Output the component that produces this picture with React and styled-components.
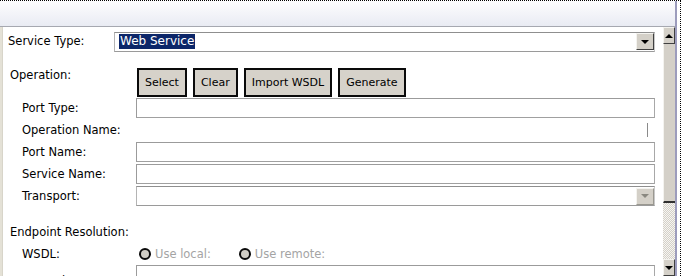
import styled, { createGlobalStyle } from "styled-components";

const Global = createGlobalStyle`
    html, body {
        margin: 0;
        padding: 0;
        background: #ffffff;
        overflow: hidden;
    }
    * { box-sizing: border-box; }
`

export default function App(){
    return(
        <>
            <Global />
            <Frame>
                <Main>
                    <Header />
                    <Body>
                        <LeftStrip />
                        <Content>
                            <Row height={21} top={4}>
                                <Label width={111} indent={5}>Service Type:</Label>
                                <Combo>
                                    <Selected>Web Service</Selected>
                                    <DropButton><Arrow /></DropButton>
                                </Combo>
                            </Row>

                            <Row height={29} top={16} align="flex-start">
                                <Label indent={7} pad={1}>Operation:</Label>
                                <Buttons>
                                    <Button>Select</Button>
                                    <Button>Clear</Button>
                                    <Button>Import WSDL</Button>
                                    <Button>Generate</Button>
                                </Buttons>
                            </Row>

                            <Row top={1}>
                                <Label indent={19}>Port Type:</Label>
                                <Input />
                            </Row>
                            <Row>
                                <Label indent={19}>Operation Name:</Label>
                                <ReadOnly />
                            </Row>
                            <Row>
                                <Label indent={19}>Port Name:</Label>
                                <Input />
                            </Row>
                            <Row>
                                <Label indent={19}>Service Name:</Label>
                                <Input />
                            </Row>
                            <Row>
                                <Label indent={19}>Transport:</Label>
                                <Combo>
                                    <DropButton disabled><Arrow disabled /></DropButton>
                                </Combo>
                            </Row>

                            <Row top={16}>
                                <Label indent={7} width={300}>Endpoint Resolution:</Label>
                            </Row>
                            <Row>
                                <Label indent={19}>WSDL:</Label>
                                <Radios>
                                    <Radio><Dot />Use local:</Radio>
                                    <Radio><Dot />Use remote:</Radio>
                                </Radios>
                            </Row>
                            <Row top={1}>
                                <Label indent={28} pad={12}>Location:</Label>
                                <Input />
                            </Row>
                        </Content>
                        <Scrollbar>
                            <ScrollButton><Arrow up /></ScrollButton>
                            <Thumb />
                            <Track />
                            <ScrollButton><Arrow /></ScrollButton>
                        </Scrollbar>
                    </Body>
                </Main>
                <EdgeLine />
            </Frame>
        </>
    )
}

const Frame = styled.div`
    display: flex;
    width: 681px;
    height: 276px;
    border-top: 1px dotted #000;
    border-right: 1px dotted #000;
    padding-right: 3px;
    font-family: "DejaVu Sans", Verdana, sans-serif;
    font-size: 11.5px;
    color: #000;
    overflow: hidden;
`
const Main = styled.div`
    flex: 1;
    display: flex;
    flex-direction: column;
    min-width: 0;
`
const Header = styled.div`
    height: 26px;
    flex-shrink: 0;
    background: linear-gradient(#fdfdfe, #e9ebf3);
    border-bottom: 1px solid #a6a8b0;
`
const Body = styled.div`
    flex: 1;
    display: flex;
    min-height: 0;
`
const LeftStrip = styled.div`
    width: 3px;
    background: #e4e1d6;
    border-right: 1px solid #d8d5ca;
`
const Content = styled.div`
    flex: 1;
    display: flex;
    flex-direction: column;
    padding-right: 8px;
    overflow: hidden;
`
const Row = styled.div`
    display: flex;
    align-items: ${p => p.align || "center"};
    height: ${p => p.height || 20}px;
    margin-top: ${p => p.top ?? 2}px;
    flex-shrink: 0;
`
const Label = styled.div`
    width: ${p => p.width || 133}px;
    flex-shrink: 0;
    padding-left: ${p => p.indent}px;
    padding-top: ${p => p.pad || 0}px;
    white-space: nowrap;
    line-height: 13px;
`
const Combo = styled.div`
    flex: 1;
    height: 20px;
    display: flex;
    align-items: center;
    justify-content: space-between;
    border-top: 1px solid #8f8f8f;
    border-left: 1px solid #b4b4b4;
    border-bottom: 1px solid #9a9a9a;
    border-right: 1px solid #c8c8c8;
    padding: 1px 0 1px 4px;
    background: #fff;
`
const Selected = styled.span`
    background: #0c2669;
    color: #fff;
    line-height: 15px;
    padding: 0 1px;
    font-size: 12px;
`
const DropButton = styled.div`
    margin-left: auto;
    width: 18px;
    height: 17px;
    display: flex;
    align-items: center;
    justify-content: center;
    background: #d4d0c8;
    border-top: 1px solid #f4f3ef;
    border-left: 1px solid #f4f3ef;
    border-right: 1px solid ${p => p.disabled ? "#9a9890" : "#404040"};
    border-bottom: 1px solid ${p => p.disabled ? "#9a9890" : "#404040"};
`
const Arrow = styled.div`
    width: 0;
    height: 0;
    border-left: 4px solid transparent;
    border-right: 4px solid transparent;
    ${p => p.up
        ? `border-bottom: 4px solid #000;`
        : `border-top: 4px solid ${p.disabled ? "#8a8880" : "#000"};`}
`
const Buttons = styled.div`
    display: flex;
    gap: 6px;
    margin-left: 1px;
`
const Button = styled.button`
    height: 29px;
    padding: 0 6px;
    background: #d6d2ca;
    border: 2px solid #0a0a0a;
    font-family: "DejaVu Sans", Verdana, sans-serif;
    font-size: 11px;
    color: #000;
    line-height: 13px;
`
const Input = styled.div`
    flex: 1;
    height: 20px;
    background: #fff;
    border: 1px solid #9b9b9b;
    border-right-color: #a8a8a8;
    border-bottom-color: #a0a0a0;
`
const ReadOnly = styled.div`
    width: 512px;
    height: 14px;
    border-right: 1px solid #8a8a8a;
`
const Radios = styled.div`
    display: flex;
    gap: 28px;
    padding-left: 3px;
`
const Radio = styled.div`
    display: flex;
    align-items: center;
    gap: 4px;
    color: #a4a4a4;
`
const Dot = styled.span`
    width: 12px;
    height: 12px;
    border-radius: 50%;
    border: 2px solid #0a0a0a;
    background: #d0cdc5;
`
const Scrollbar = styled.div`
    width: 12px;
    display: flex;
    flex-direction: column;
    background: #d4d0c8;
`
const ScrollButton = styled.div`
    height: 17px;
    flex-shrink: 0;
    display: flex;
    align-items: center;
    justify-content: center;
    background: #d4d0c8;
    border-top: 1px solid #f4f3ef;
    border-left: 1px solid #f4f3ef;
    border-right: 1px solid #404040;
    border-bottom: 1px solid #404040;
`
const Thumb = styled.div`
    height: 159px;
    flex-shrink: 0;
    background: #d4d0c8;
    border-left: 1px solid #f4f3ef;
    border-bottom: 2px solid #303030;
`
const Track = styled.div`
    flex: 1;
    background: repeating-conic-gradient(#d4d0c8 0% 25%, #f6f5f2 0% 50%) 0 0 / 2px 2px;
`
const EdgeLine = styled.div`
    width: 2px;
    background: #9c9cbc;
`
